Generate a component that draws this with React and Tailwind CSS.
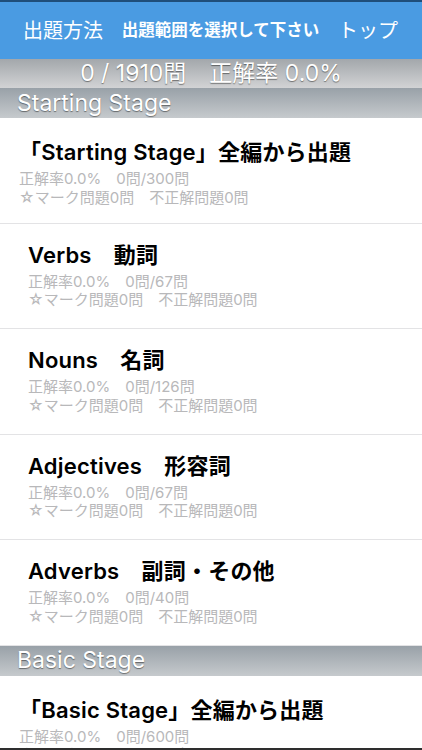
import React from 'react';

const font = { fontFamily: '"Inter", "Noto Sans CJK JP", sans-serif' };

const sections = [
  {
    name: 'Starting Stage',
    all: { title: '「Starting Stage」全編から出題', total: 300 },
    items: [
      { title: 'Verbs　動詞', total: 67 },
      { title: 'Nouns　名詞', total: 126 },
      { title: 'Adjectives　形容詞', total: 67 },
      { title: 'Adverbs　副詞・その他', total: 40 },
    ],
  },
  {
    name: 'Basic Stage',
    all: { title: '「Basic Stage」全編から出題', total: 600 },
    items: [],
  },
];

function Row({ title, total, all }) {
  return (
    <div
      className={`h-[105.6px] bg-white border-b border-[#e3e3e5] ${all ? 'pl-[19px] pt-[21px]' : 'pl-[28px] pt-[18px]'}`}
    >
      <div className="leading-[26px] font-semibold text-black text-[22px] tracking-[0.2px]">{title}</div>
      <div className="mt-[5px] text-[15px] leading-[18.5px] text-[#b8b8ba]">
        <div>正解率0.0%　0問/{total}問</div>
        <div>☆マーク問題0問　不正解問題0問</div>
      </div>
    </div>
  );
}

export default function App() {
  return (
    <div className="relative w-[422px] h-[750px] overflow-hidden bg-white" style={font}>
      {/* Nav bar */}
      <div className="h-[59px] bg-[#4a9be2] border-t-2 border-[#1f4e7a] flex items-center justify-between pl-[23px] pr-[24px] text-white">
        <span className="text-[20px]">出題方法</span>
        <span className="text-[16.5px] font-bold">出題範囲を選択して下さい</span>
        <span className="text-[20px]">トップ</span>
      </div>

      {/* Summary bar */}
      <div className="h-[29px] bg-gradient-to-b from-[#a3a7ab] to-[#d2d3d5] flex items-center justify-center text-white text-[23px] leading-none [text-shadow:0_1px_1px_rgba(0,0,0,0.45)]">
        0 / 1910問　正解率 0.0%
      </div>

      {sections.map((s) => (
        <div key={s.name}>
          <div className="h-[30px] bg-gradient-to-b from-[#99a1a8] to-[#c6cacd] flex items-center pl-[17px] text-white text-[23px] leading-none [text-shadow:0_1px_1px_rgba(0,0,0,0.45)]">
            {s.name}
          </div>
          <Row title={s.all.title} total={s.all.total} all />
          {s.items.map((it) => (
            <Row key={it.title} title={it.title} total={it.total} />
          ))}
        </div>
      ))}

      {/* bottom edge */}
      <div className="absolute left-0 right-0 bottom-0 h-[2px] bg-[#2e2e2e]" />
    </div>
  );
}
